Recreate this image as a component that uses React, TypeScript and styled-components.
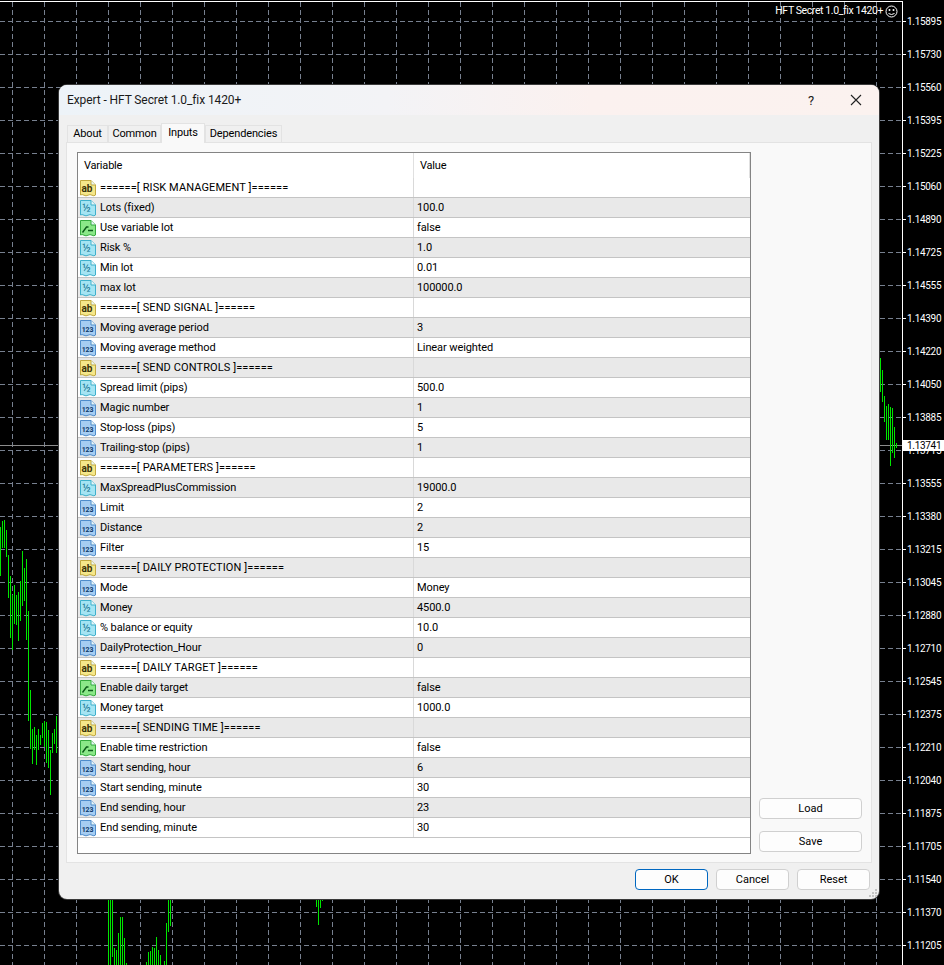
import React from "react";
import styled, { createGlobalStyle } from "styled-components";

const GlobalStyle = createGlobalStyle`
  html, body { margin: 0; padding: 0; background: #000; }
  * { box-sizing: border-box; }
`;

const UI_FONT = `Roboto, "Noto Sans", sans-serif`;

type Kind = "ab" | "half" | "num" | "bool";

interface Param {
  name: string;
  value?: string;
  kind: Kind;
}

const params: Param[] = [
  { name: "======[ RISK MANAGEMENT ]======", kind: "ab" },
  { name: "Lots (fixed)", value: "100.0", kind: "half" },
  { name: "Use variable lot", value: "false", kind: "bool" },
  { name: "Risk %", value: "1.0", kind: "half" },
  { name: "Min lot", value: "0.01", kind: "half" },
  { name: "max lot", value: "100000.0", kind: "half" },
  { name: "======[ SEND SIGNAL ]======", kind: "ab" },
  { name: "Moving average period", value: "3", kind: "num" },
  { name: "Moving average method", value: "Linear weighted", kind: "num" },
  { name: "======[ SEND CONTROLS ]======", kind: "ab" },
  { name: "Spread limit (pips)", value: "500.0", kind: "half" },
  { name: "Magic number", value: "1", kind: "num" },
  { name: "Stop-loss (pips)", value: "5", kind: "num" },
  { name: "Trailing-stop (pips)", value: "1", kind: "num" },
  { name: "======[ PARAMETERS ]======", kind: "ab" },
  { name: "MaxSpreadPlusCommission", value: "19000.0", kind: "half" },
  { name: "Limit", value: "2", kind: "num" },
  { name: "Distance", value: "2", kind: "num" },
  { name: "Filter", value: "15", kind: "num" },
  { name: "======[ DAILY PROTECTION ]======", kind: "ab" },
  { name: "Mode", value: "Money", kind: "num" },
  { name: "Money", value: "4500.0", kind: "half" },
  { name: "% balance or equity", value: "10.0", kind: "half" },
  { name: "DailyProtection_Hour", value: "0", kind: "num" },
  { name: "======[ DAILY TARGET ]======", kind: "ab" },
  { name: "Enable daily target", value: "false", kind: "bool" },
  { name: "Money target", value: "1000.0", kind: "half" },
  { name: "======[ SENDING TIME ]======", kind: "ab" },
  { name: "Enable time restriction", value: "false", kind: "bool" },
  { name: "Start sending, hour", value: "6", kind: "num" },
  { name: "Start sending, minute", value: "30", kind: "num" },
  { name: "End sending, hour", value: "23", kind: "num" },
  { name: "End sending, minute", value: "30", kind: "num" },
];

const prices = [
  "1.15895", "1.15730", "1.15560", "1.15395", "1.15225", "1.15060", "1.14890", "1.14725",
  "1.14555", "1.14390", "1.14220", "1.14050", "1.13885", "1.13715", "1.13555", "1.13380",
  "1.13215", "1.13045", "1.12880", "1.12710", "1.12545", "1.12375", "1.12210", "1.12040",
  "1.11875", "1.11705", "1.11540", "1.11370", "1.11205",
];

// x, top, bottom of each bar
const bars: [number, number, number][] = [
  [0, 527, 576], [2, 521, 548], [4, 520, 548], [6, 530, 557], [8, 555, 598], [10, 576, 638],
  [12, 595, 650], [14, 585, 624], [16, 595, 625], [18, 592, 641], [20, 581, 621], [22, 551, 606],
  [24, 568, 601], [26, 559, 640], [28, 611, 721], [30, 690, 749], [32, 729, 764], [34, 727, 750],
  [36, 735, 765], [38, 729, 750], [40, 735, 745], [42, 723, 738], [44, 721, 747], [46, 722, 763],
  [48, 730, 768], [50, 750, 795], [52, 733, 753], [54, 729, 744], [56, 716, 753], [58, 694, 726],
  [108, 890, 965], [110, 890, 965], [112, 890, 957], [114, 948, 965], [116, 950, 965], [118, 933, 965],
  [120, 917, 965], [122, 917, 965], [124, 938, 965], [126, 963, 965], [146, 962, 965], [148, 952, 965],
  [150, 951, 965], [152, 947, 965], [154, 948, 965], [156, 937, 965], [158, 950, 965], [160, 955, 965],
  [164, 961, 965], [166, 923, 965], [168, 890, 932], [170, 890, 926], [316, 890, 907], [318, 890, 925],
  [320, 890, 908], [322, 890, 901], [880, 358, 392], [882, 370, 402], [884, 396, 422], [886, 406, 440],
  [888, 404, 440], [890, 407, 466], [892, 408, 453], [894, 427, 458], [896, 443, 448],
];

const Screen = styled.div`
  position: relative;
  width: 944px;
  height: 965px;
  overflow: hidden;
  background: #000;
  font-family: ${UI_FONT};
`;

const ChartCanvas = styled.svg`
  position: absolute;
  inset: 0;
  display: block;
`;

const PriceAxis = styled.div`
  position: absolute;
  left: 907px;
  top: 5px;
  display: flex;
  flex-direction: column;
`;

const PriceLabel = styled.span`
  display: flex;
  align-items: center;
  height: 33px;
  color: #fff;
  font-size: 10px;
  letter-spacing: -0.3px;
`;

const CurrentPrice = styled.div`
  position: absolute;
  left: 903px;
  top: 440px;
  width: 41px;
  height: 11px;
  padding-left: 4px;
  background: #fff;
  color: #000;
  font-size: 10px;
  letter-spacing: -0.3px;
  line-height: 11px;
`;

const ChartTitle = styled.div`
  position: absolute;
  right: 46px;
  top: 4px;
  display: flex;
  align-items: center;
  gap: 2px;
  color: #fff;
  font-size: 10.5px;
  letter-spacing: -0.4px;
  line-height: 14px;
`;

const Dialog = styled.div`
  position: absolute;
  left: 59px;
  top: 85px;
  width: 820px;
  height: 814px;
  display: flex;
  flex-direction: column;
  overflow: hidden;
  border-radius: 8px;
  background: #f0f0f0;
  box-shadow: 0 0 0 1px #3a3a3a;
`;

const TitleBar = styled.div`
  flex: none;
  height: 30px;
  display: flex;
  align-items: center;
  padding-left: 8px;
  background: linear-gradient(90deg, #edf3f8 0%, #f3f3f6 40%, #fbf1ef 65%, #fbf2ef 100%);
  color: #1a1a1a;
  font-size: 12px;
  letter-spacing: -0.1px;
`;

const TitleText = styled.span`
  flex: 1;
`;

const HelpMark = styled.span`
  width: 16px;
  margin-right: 31px;
  text-align: center;
  font-size: 13px;
`;

const CloseMark = styled.svg`
  display: block;
  margin-right: 17px;
`;

const Body = styled.div`
  flex: 1;
  display: flex;
  flex-direction: column;
  padding: 8px 7px 0;
  min-height: 0;
`;

const TabStrip = styled.div`
  flex: none;
  height: 20px;
  display: flex;
  align-items: flex-end;
  padding-left: 1px;
  position: relative;
  z-index: 1;
  margin-bottom: -1px;
`;

const Tab = styled.div<{ $active?: boolean; $width: number }>`
  width: ${({ $width }) => $width}px;
  height: ${({ $active }) => ($active ? 20 : 18)}px;
  display: flex;
  align-items: center;
  justify-content: center;
  padding-bottom: ${({ $active }) => ($active ? 3 : 1)}px;
  border: 1px solid #e3e3e3;
  border-bottom: ${({ $active }) => ($active ? "none" : "1px solid #e3e3e3")};
  background: ${({ $active }) => ($active ? "#f9f9f9" : "#f0f0f0")};
  color: #000;
  font-size: 11px;
  letter-spacing: -0.15px;
`;

const Panel = styled.div`
  flex: none;
  height: 721px;
  display: flex;
  gap: 8px;
  padding: 9px 9px 0 10px;
  border: 1px solid #e3e3e3;
  background: #f9f9f9;
`;

const Table = styled.div`
  flex: none;
  width: 674px;
  height: 702px;
  display: flex;
  flex-direction: column;
  border: 1px solid #848484;
  background: #fff;
`;

const Row = styled.div<{ $grey?: boolean }>`
  flex: none;
  height: 20px;
  display: grid;
  grid-template-columns: 336px 1fr;
  border-bottom: 1px solid #c4c4c4;
  background: ${({ $grey }) => ($grey ? "#e9e9e9" : "#fff")};
`;

const HeaderRow = styled.div`
  flex: none;
  height: 25px;
  display: grid;
  grid-template-columns: 336px 1fr;
  background: #fff;
  color: #000;
  font-size: 11px;
  letter-spacing: -0.2px;
  line-height: 25px;
`;

const HeaderCell = styled.div`
  padding-left: 6px;
  border-right: 1px solid #e0e0e0;
`;

const NameCell = styled.div<{ $section?: boolean }>`
  display: flex;
  align-items: center;
  gap: 4px;
  padding-left: 2px;
  border-right: 1px solid #d9d9d9;
  color: #000;
  font-size: 11px;
  letter-spacing: ${({ $section }) => ($section ? "0.1px" : "-0.1px")};
  white-space: nowrap;
`;

const ValueCell = styled.div`
  display: flex;
  align-items: center;
  padding-left: 3px;
  color: #000;
  font-size: 11px;
  letter-spacing: -0.1px;
`;

const SideColumn = styled.div`
  flex: 1;
  display: flex;
  flex-direction: column;
  justify-content: flex-end;
  gap: 12px;
  padding-bottom: 2px;
  height: 702px;
`;

const PushButton = styled.div<{ $primary?: boolean; $width?: number }>`
  width: ${({ $width }) => ($width ? `${$width}px` : "100%")};
  height: 21px;
  display: flex;
  align-items: center;
  justify-content: center;
  border: 1px solid ${({ $primary }) => ($primary ? "#0067c0" : "#d0d0d0")};
  border-radius: 4px;
  background: #fdfdfd;
  color: #000;
  font-size: 11px;
`;

const Footer = styled.div`
  flex: 1;
  display: flex;
  justify-content: flex-end;
  gap: 8px;
  padding: 6px 2px 0 0;
`;

const Grip = styled.svg`
  position: absolute;
  right: 1px;
  bottom: 1px;
`;

const iconStyles: Record<Kind, { fill: string; stroke: string }> = {
  ab: { fill: "#f5e78a", stroke: "#c2a93f" },
  half: { fill: "#a4e4f3", stroke: "#3fb0cc" },
  num: { fill: "#a6cdf2", stroke: "#4f8ccb" },
  bool: { fill: "#8be888", stroke: "#35aa3e" },
};

const ParamIcon: React.FC<{ kind: Kind }> = ({ kind }) => {
  const { fill, stroke } = iconStyles[kind];
  return (
    <svg width="16" height="18" viewBox="0 0 16 18">
      <path
        d="M0.5 1.5H11L15.5 6V16Q14 17.5 12 16.2Q10 15 8 16.2Q6 17.5 4 16.2Q2 15 0.5 16Z"
        fill={fill}
        stroke={stroke}
      />
      <path d="M11 1.5V6H15.5" fill="#e8f6f8" stroke={stroke} />
      {kind === "ab" && (
        <text x="7" y="13" textAnchor="middle" fontFamily="Roboto" fontWeight="700" fontSize="10" fill="#3a3208">
          ab
        </text>
      )}
      {kind === "half" && (
        <text x="6.5" y="12.5" textAnchor="middle" fontFamily="Roboto" fontSize="11" fill="#1b7590">
          ½
        </text>
      )}
      {kind === "num" && (
        <text x="7.5" y="12.5" textAnchor="middle" fontFamily="Roboto" fontWeight="700" fontSize="7" fill="#0f3a6a">
          123
        </text>
      )}
      {kind === "bool" && (
        <path d="M2.5 13.5L6.5 8H8.5M8 11.5H13" fill="none" stroke="#0c5a18" strokeWidth="1.4" />
      )}
    </svg>
  );
};

const Chart: React.FC = () => {
  const verticals = Array.from({ length: 28 }, (_, i) => 12.5 + i * 32);
  const horizontals = prices.map((_, i) => 21.5 + i * 33);
  return (
    <ChartCanvas width="944" height="965" viewBox="0 0 944 965">
      <g stroke="#77808f" strokeDasharray="5 3">
        {verticals.map((x) => (
          <line key={x} x1={x} y1="2" x2={x} y2="965" />
        ))}
        {horizontals.map((y) => (
          <line key={y} x1="0" y1={y} x2="902" y2={y} />
        ))}
      </g>
      <line x1="0" y1="445.5" x2="902" y2="445.5" stroke="#8c8c8c" />
      <g stroke="#00e600">
        {bars.map(([x, top, bottom]) => (
          <line key={x} x1={x + 0.5} y1={top} x2={x + 0.5} y2={bottom} />
        ))}
      </g>
      <g stroke="#fff">
        <line x1="0" y1="1.5" x2="902" y2="1.5" />
        <line x1="902.5" y1="1" x2="902.5" y2="965" />
        {horizontals.map((y) => (
          <line key={y} x1="902" y1={y} x2="906" y2={y} />
        ))}
      </g>
    </ChartCanvas>
  );
};

const App: React.FC = () => {
  return (
    <Screen>
      <GlobalStyle />
      <Chart />
      <ChartTitle>
        HFT Secret 1.0_fix 1420+
        <svg width="13" height="13" viewBox="0 0 13 13">
          <circle cx="6.5" cy="6.5" r="5.5" fill="none" stroke="#fff" />
          <circle cx="4.5" cy="5" r="1" fill="#fff" />
          <circle cx="8.5" cy="5" r="1" fill="#fff" />
          <path d="M3.5 8.5Q6.5 10.5 9.5 8.5" fill="none" stroke="#fff" />
        </svg>
      </ChartTitle>
      <PriceAxis>
        {prices.map((p) => (
          <PriceLabel key={p}>{p}</PriceLabel>
        ))}
      </PriceAxis>
      <CurrentPrice>1.13741</CurrentPrice>
      <Dialog>
        <TitleBar>
          <TitleText>Expert - HFT Secret 1.0_fix 1420+</TitleText>
          <HelpMark>?</HelpMark>
          <CloseMark width="12" height="12" viewBox="0 0 12 12">
            <path d="M1 1L11 11M11 1L1 11" stroke="#222" strokeWidth="1.1" fill="none" />
          </CloseMark>
        </TitleBar>
        <Body>
          <TabStrip>
            <Tab $width={41}>About</Tab>
            <Tab $width={53}>Common</Tab>
            <Tab $width={44} $active>
              Inputs
            </Tab>
            <Tab $width={77}>Dependencies</Tab>
          </TabStrip>
          <Panel>
            <Table>
              <HeaderRow>
                <HeaderCell>Variable</HeaderCell>
                <HeaderCell>Value</HeaderCell>
              </HeaderRow>
              {params.map((p, i) => (
                <Row key={p.name} $grey={i % 2 === 1}>
                  <NameCell $section={p.kind === "ab"}>
                    <ParamIcon kind={p.kind} />
                    {p.name}
                  </NameCell>
                  <ValueCell>{p.value}</ValueCell>
                </Row>
              ))}
            </Table>
            <SideColumn>
              <PushButton>Load</PushButton>
              <PushButton>Save</PushButton>
            </SideColumn>
          </Panel>
          <Footer>
            <PushButton $primary $width={73}>
              OK
            </PushButton>
            <PushButton $width={73}>Cancel</PushButton>
            <PushButton $width={73}>Reset</PushButton>
          </Footer>
        </Body>
        <Grip width="9" height="9" viewBox="0 0 9 9">
          <g fill="#c4c4c4">
            <rect x="6" y="0" width="2" height="2" />
            <rect x="3" y="3" width="2" height="2" />
            <rect x="6" y="3" width="2" height="2" />
            <rect x="0" y="6" width="2" height="2" />
            <rect x="3" y="6" width="2" height="2" />
            <rect x="6" y="6" width="2" height="2" />
          </g>
        </Grip>
      </Dialog>
    </Screen>
  );
};

export default App;
